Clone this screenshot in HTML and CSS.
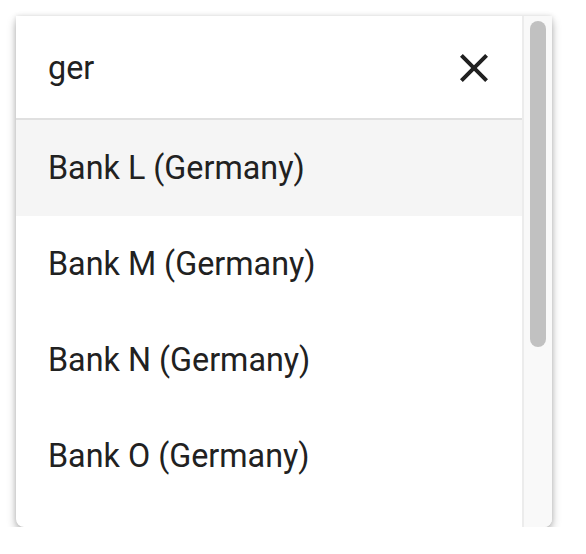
FILE: index.html
```html
<!DOCTYPE html>
<html>
<head>
<meta charset="utf-8">
<link rel="stylesheet" href="styles.css">
</head>
<body>
<div class="panel">
  <div class="content">
    <div class="search">
      <span class="query">ger</span>
      <svg class="close" viewBox="0 0 24 24" width="48" height="48"><path d="M19 6.41L17.59 5 12 10.59 6.41 5 5 6.41 10.59 12 5 17.59 6.41 19 12 13.41 17.59 19 19 17.59 13.41 12z" fill="#212121"/></svg>
    </div>
    <div class="list">
      <div class="item active">Bank L (Germany)</div>
      <div class="item">Bank M (Germany)</div>
      <div class="item">Bank N (Germany)</div>
      <div class="item">Bank O (Germany)</div>
    </div>
  </div>
  <div class="scrollbar"><div class="thumb"></div></div>
</div>
</body>
</html>
```
FILE: styles.css
```css
html, body {
  margin: 0;
  padding: 0;
  background: #fff;
}
body {
  font-family: Roboto, "Liberation Sans", sans-serif;
  color: #212121;
}
.panel {
  margin: 16px 0 0 16px;
  width: 536px;
  height: 511px;
  display: flex;
  background: #fff;
  border-radius: 0 0 8px 8px;
  box-shadow: 0 5px 10px rgba(0,0,0,0.28), 0 0 5px rgba(0,0,0,0.12);
  overflow: hidden;
}
.content {
  flex: 1;
  display: flex;
  flex-direction: column;
  overflow: hidden;
}
.search {
  flex: none;
  height: 102px;
  border-bottom: 2px solid #e0e0e0;
  display: flex;
  align-items: center;
  justify-content: space-between;
  padding: 0 24px 0 32px;
  box-sizing: content-box;
}
.query {
  font-size: 32.3px;
  line-height: 1;
  position: relative;
  top: 1px;
}
.close {
  display: block;
  position: relative;
  top: 1px;
}
.list {
  display: flex;
  flex-direction: column;
}
.item {
  flex: none;
  height: 96px;
  display: flex;
  align-items: center;
  padding-left: 32px;
  font-size: 32.3px;
}
.item.active {
  background: #f5f5f5;
}
.scrollbar {
  flex: none;
  width: 16px;
  border-left: 2px solid #ececec;
  background: #f9f9f9;
  padding: 5px 6px 0 6px;
  box-sizing: content-box;
}
.thumb {
  width: 16px;
  height: 326px;
  border-radius: 8px;
  background: #c1c1c1;
}
```
